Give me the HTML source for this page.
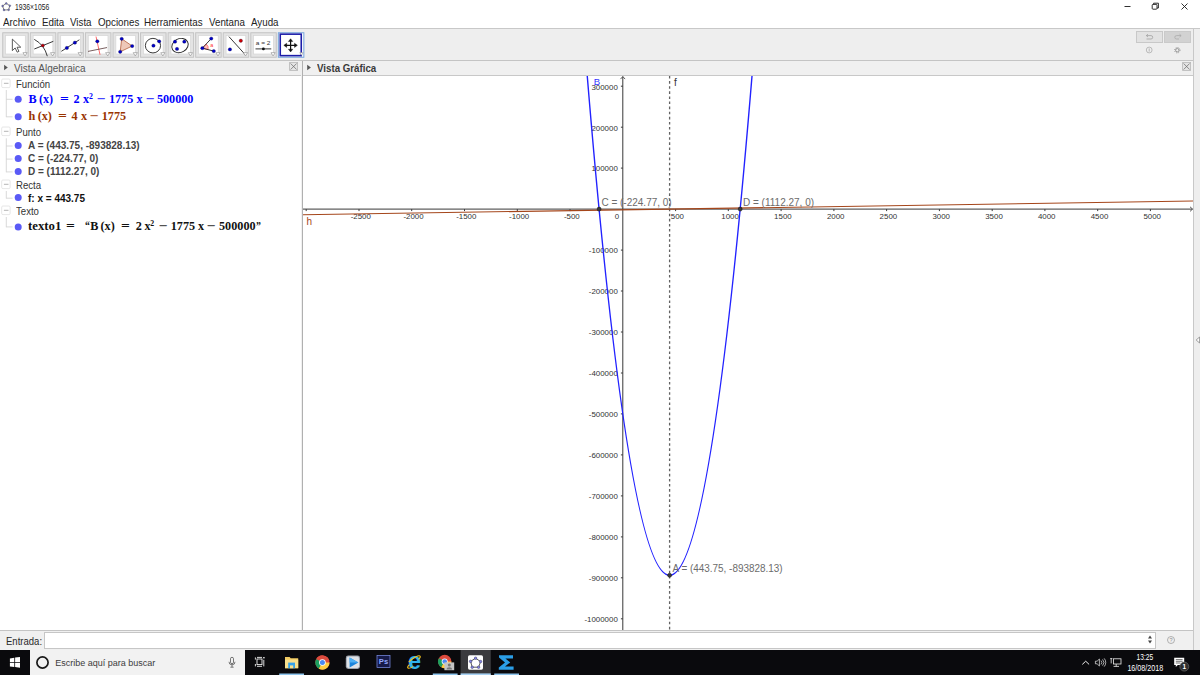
<!DOCTYPE html>
<html lang="es"><head><meta charset="utf-8"><title>1936×1056</title>
<style>
html,body{margin:0;padding:0}
body{width:1200px;height:675px;overflow:hidden;background:#fff;position:relative;font-family:"Liberation Sans",sans-serif;color:#222}
.abs{position:absolute}
.title{left:15px;top:1.5px;font-size:9.2px;color:#222;line-height:11px;transform:scaleX(0.74);transform-origin:0 0}
.menu{left:0;top:14px;height:15px;width:1200px;font-size:10.4px;line-height:15px;white-space:nowrap;color:#222}
.menu span{position:absolute;top:0.5px;transform:scaleX(0.94);transform-origin:0 0}
.toolbar{left:0;top:28px;width:1200px;height:33px;background:#eeeeee;border-top:1px solid #c8c8c8;border-bottom:1px solid #c4c4c4;box-sizing:border-box}
.phead{top:61px;height:14px;background:#f0f0f0;border-bottom:1px solid #c8c8c8;font-size:10px;line-height:15.2px;color:#555}
.alg{left:0;top:76px;width:300.6px;height:554px;background:#fff}
.cat{position:absolute;left:15.9px;font-size:10px;line-height:12px;color:#333;transform:scaleX(0.96);transform-origin:0 0}
.row{position:absolute;left:28px;font-size:10px;line-height:12px;font-weight:bold;color:#222;white-space:nowrap}
.srow{position:absolute;left:0;height:14px;width:300px;font-family:"Liberation Serif",serif;font-weight:bold;font-size:12.2px;line-height:14px;white-space:nowrap}
.srow span{position:absolute;top:0}
.srow sup{font-size:7.8px;line-height:0;position:relative;top:1.2px;vertical-align:super}
.srow .op{transform:scaleX(1.28);transform-origin:0 50%}
.srow .q{transform:scaleX(0.8);transform-origin:0 50%}
.split{left:300.6px;top:61px;width:2.5px;height:569px;background:#f0f0f0;border-right:1px solid #b0b0b0;box-sizing:border-box}
.rstrip{z-index:2;left:1193px;top:29px;width:7px;height:621px;background:#eeeeee;border-left:1px solid #c8c8c8;box-sizing:border-box}
.inbar{left:0;top:630px;width:1200px;height:20px;background:#f0f0f0;border-top:1px solid #c4c4c4;box-sizing:border-box}
.infield{left:44px;top:632px;width:1112px;height:17px;background:#fff;border:0.8px solid #c6c6c6;box-sizing:border-box}
.task{left:0;top:650px;width:1200px;height:25px;background:#0a0a0d}
.search{left:30px;top:650px;width:215px;height:25px;background:#f2f2f2}
</style></head><body>
<!-- title bar -->
<svg class="abs" style="left:1.3px;top:2.2px" width="10.8" height="10" viewBox="0 0 13 12"><path d="M6.3 1.6 L10.6 4.4 L9.2 9.4 L3.6 9.6 L1.9 4.8 Z" fill="none" stroke="#444" stroke-width="0.8"/><g fill="#7a7ad8" stroke="#333" stroke-width="0.4"><circle cx="6.3" cy="1.7" r="1.1"/><circle cx="10.6" cy="4.4" r="1.1"/><circle cx="9.2" cy="9.4" r="1.1"/><circle cx="3.6" cy="9.6" r="1.1"/><circle cx="1.9" cy="4.8" r="1.1"/></g></svg>
<div class="abs title">1936×1056</div>
<svg class="abs" style="left:1115px;top:0" width="85" height="14" viewBox="0 0 85 14" fill="none" stroke="#1a1a1a" stroke-width="0.9"><path d="M9.5 6.5 H15.5"/><rect x="37.2" y="4.4" width="4.8" height="4.8" rx="0.8"/><path d="M38.6 4.4 V3.2 H43.4 V8 H42"/><path d="M66.5 3.5 L72.5 9.5 M72.5 3.5 L66.5 9.5"/></svg>
<!-- menu -->
<div class="abs menu"><span style="left:3px">Archivo</span><span style="left:41.6px">Edita</span><span style="left:69.6px">Vista</span><span style="left:97.5px">Opciones</span><span style="left:144.1px">Herramientas</span><span style="left:208.5px">Ventana</span><span style="left:250.5px">Ayuda</span></div>
<!-- toolbar -->
<div class="abs toolbar"><svg class="abs" style="left:0;top:-1px" width="310" height="33" viewBox="0 28 310 33"><rect x="2.75" y="32.75" width="25.5" height="24.5" fill="#e4e4e4" stroke="#c4c4c4" stroke-width="1"/><rect x="5.60" y="35.60" width="19.7" height="18.4" fill="#fff" stroke="#d6d6d6" stroke-width="0.7"/><g transform="translate(4.85 37.00) scale(1 0.96)"><path transform="translate(1.5 -0.8)" d="M6 3 V15 L8.8 12.2 L10.8 16.6 L12.6 15.8 L10.7 11.5 L14.4 11.4 Z" fill="#fff" stroke="#444" stroke-width="0.9" stroke-linejoin="round"/></g><path d="M22.95 52.65 h4.2 l-2.1 3.3 z" fill="#fff" stroke="#8a8a8a" stroke-width="0.6"/><rect x="30.31" y="32.75" width="25.5" height="24.5" fill="#e4e4e4" stroke="#c4c4c4" stroke-width="1"/><rect x="33.16" y="35.60" width="19.7" height="18.4" fill="#fff" stroke="#d6d6d6" stroke-width="0.7"/><g transform="translate(32.41 37.00) scale(1 0.96)"><g transform="translate(0.9 1)"><g stroke="#2a2a2a" stroke-width="0.95" fill="none"><path d="M1 11.5 L20 3.5"/><path d="M1 1.5 Q11 7 14 19"/></g><circle cx="9.5" cy="7.8" r="1.6" fill="#c00000" stroke="#000033" stroke-width="0.3"/></g></g><path d="M50.51 52.65 h4.2 l-2.1 3.3 z" fill="#fff" stroke="#8a8a8a" stroke-width="0.6"/><rect x="57.87" y="32.75" width="25.5" height="24.5" fill="#e4e4e4" stroke="#c4c4c4" stroke-width="1"/><rect x="60.72" y="35.60" width="19.7" height="18.4" fill="#fff" stroke="#d6d6d6" stroke-width="0.7"/><g transform="translate(59.97 37.00) scale(1 0.96)"><g transform="translate(-0.6 0.4)"><path d="M2 14.5 L20 2.5" stroke="#2a2a2a" stroke-width="0.95"/><circle cx="7.5" cy="11" r="1.7" fill="#0000c8" stroke="#000033" stroke-width="0.3"/><circle cx="15.5" cy="5.5" r="1.7" fill="#0000c8" stroke="#000033" stroke-width="0.3"/></g></g><path d="M78.07 52.65 h4.2 l-2.1 3.3 z" fill="#fff" stroke="#8a8a8a" stroke-width="0.6"/><rect x="85.43" y="32.75" width="25.5" height="24.5" fill="#e4e4e4" stroke="#c4c4c4" stroke-width="1"/><rect x="88.28" y="35.60" width="19.7" height="18.4" fill="#fff" stroke="#d6d6d6" stroke-width="0.7"/><g transform="translate(87.53 37.00) scale(1 0.96)"><g transform="translate(-0.5 -0.5)"><path d="M9 0 L13 19" stroke="#ff4040" stroke-width="0.8"/><path d="M1 15.5 L20 11.5" stroke="#553333" stroke-width="0.8"/><circle cx="10.3" cy="5" r="1.7" fill="#0000c8" stroke="#000033" stroke-width="0.3"/></g></g><path d="M105.63 52.65 h4.2 l-2.1 3.3 z" fill="#fff" stroke="#8a8a8a" stroke-width="0.6"/><rect x="112.99" y="32.75" width="25.5" height="24.5" fill="#e4e4e4" stroke="#c4c4c4" stroke-width="1"/><rect x="115.84" y="35.60" width="19.7" height="18.4" fill="#fff" stroke="#d6d6d6" stroke-width="0.7"/><g transform="translate(115.09 37.00) scale(1 0.96)"><g transform="translate(-0.4 -0.6)"><path d="M7 2.5 L17.5 10 L5.5 16 Z" fill="#eec8b8" stroke="#b86a4a" stroke-width="0.9"/><circle cx="7" cy="2.5" r="1.7" fill="#0000c8" stroke="#000033" stroke-width="0.3"/><circle cx="17.5" cy="10" r="1.7" fill="#0000c8" stroke="#000033" stroke-width="0.3"/><circle cx="5.5" cy="16" r="1.7" fill="#0000c8" stroke="#000033" stroke-width="0.3"/></g></g><path d="M133.19 52.65 h4.2 l-2.1 3.3 z" fill="#fff" stroke="#8a8a8a" stroke-width="0.6"/><rect x="140.55" y="32.75" width="25.5" height="24.5" fill="#e4e4e4" stroke="#c4c4c4" stroke-width="1"/><rect x="143.40" y="35.60" width="19.7" height="18.4" fill="#fff" stroke="#d6d6d6" stroke-width="0.7"/><g transform="translate(142.65 37.00) scale(1 0.96)"><g transform="translate(1 -1)"><circle cx="9.3" cy="10" r="7.6" fill="none" stroke="#2a2a2a" stroke-width="0.95"/><circle cx="9.8" cy="10" r="1.7" fill="#0000c8" stroke="#000033" stroke-width="0.3"/><circle cx="15.5" cy="5.5" r="1.7" fill="#0000c8" stroke="#000033" stroke-width="0.3"/></g></g><path d="M160.75 52.65 h4.2 l-2.1 3.3 z" fill="#fff" stroke="#8a8a8a" stroke-width="0.6"/><rect x="168.11" y="32.75" width="25.5" height="24.5" fill="#e4e4e4" stroke="#c4c4c4" stroke-width="1"/><rect x="170.96" y="35.60" width="19.7" height="18.4" fill="#fff" stroke="#d6d6d6" stroke-width="0.7"/><g transform="translate(170.21 37.00) scale(1 0.96)"><g transform="translate(-0.7 -1.1)"><ellipse cx="10.5" cy="10" rx="8.6" ry="7" transform="rotate(-30 10.5 10)" fill="none" stroke="#2a2a2a" stroke-width="0.95"/><circle cx="5.5" cy="6" r="1.7" fill="#0000c8" stroke="#000033" stroke-width="0.3"/><circle cx="14.8" cy="6" r="1.7" fill="#0000c8" stroke="#000033" stroke-width="0.3"/><circle cx="7.5" cy="13.5" r="1.7" fill="#0000c8" stroke="#000033" stroke-width="0.3"/></g></g><path d="M188.31 52.65 h4.2 l-2.1 3.3 z" fill="#fff" stroke="#8a8a8a" stroke-width="0.6"/><rect x="195.67" y="32.75" width="25.5" height="24.5" fill="#e4e4e4" stroke="#c4c4c4" stroke-width="1"/><rect x="198.52" y="35.60" width="19.7" height="18.4" fill="#fff" stroke="#d6d6d6" stroke-width="0.7"/><g transform="translate(197.77 37.00) scale(1 0.96)"><path d="M4.6 11.6 L8.4 7.3 A5.5 5.5 0 0 1 10.2 13.2 Z" fill="#ffc0c0" stroke="#ff3030" stroke-width="0.6"/><path d="M13.5 1.6 L4.6 11.6 L16 14.7" fill="none" stroke="#2a2a2a" stroke-width="0.95"/><circle cx="13.5" cy="1.6" r="1.7" fill="#0000c8" stroke="#000033" stroke-width="0.3"/><circle cx="4.6" cy="11.6" r="1.7" fill="#0000c8" stroke="#000033" stroke-width="0.3"/><circle cx="16" cy="14.7" r="1.7" fill="#0000c8" stroke="#000033" stroke-width="0.3"/><text x="12.4" y="10.6" font-size="5.5" fill="#ff3030" font-family="Liberation Sans, sans-serif">a</text></g><path d="M215.87 52.65 h4.2 l-2.1 3.3 z" fill="#fff" stroke="#8a8a8a" stroke-width="0.6"/><rect x="223.23" y="32.75" width="25.5" height="24.5" fill="#e4e4e4" stroke="#c4c4c4" stroke-width="1"/><rect x="226.08" y="35.60" width="19.7" height="18.4" fill="#fff" stroke="#d6d6d6" stroke-width="0.7"/><g transform="translate(225.33 37.00) scale(1 0.96)"><path d="M3.6 -0.4 L20.2 18.7" stroke="#2a2a2a" stroke-width="0.95"/><circle cx="4.6" cy="12.9" r="1.7" fill="#0000c8" stroke="#000033" stroke-width="0.3"/><circle cx="15.5" cy="3.9" r="1.7" fill="#d00000" stroke="#000033" stroke-width="0.3"/></g><path d="M243.43 52.65 h4.2 l-2.1 3.3 z" fill="#fff" stroke="#8a8a8a" stroke-width="0.6"/><rect x="250.79" y="32.75" width="25.5" height="24.5" fill="#e4e4e4" stroke="#c4c4c4" stroke-width="1"/><rect x="253.64" y="35.60" width="19.7" height="18.4" fill="#fff" stroke="#d6d6d6" stroke-width="0.7"/><g transform="translate(252.89 37.00) scale(1 0.96)"><text x="10.3" y="8.2" font-size="6.5" text-anchor="middle" fill="#333" font-family="Liberation Sans, sans-serif">a = 2</text><path d="M2.6 12.4 H18.4" stroke="#2a2a2a" stroke-width="0.95"/><circle cx="10.5" cy="12.4" r="1.4" fill="#111"/></g><path d="M270.99 52.65 h4.2 l-2.1 3.3 z" fill="#fff" stroke="#8a8a8a" stroke-width="0.6"/><rect x="278.35" y="32.75" width="25.5" height="24.5" fill="#fff" stroke="#74a4dc" stroke-width="1"/><rect x="280.25" y="34.15" width="21" height="21.5" fill="#fff" stroke="#1c1ca8" stroke-width="1.6"/><g transform="translate(280.45 37.00) scale(1 0.96)"><g transform="translate(10.15 8.7)" fill="#111" stroke="#111" stroke-width="0.4"><path d="M0 -5 V5 M-5 0 H5" stroke-width="1.2"/><path d="M0 -6.9 l-2.2 2.9 h4.4z M0 6.9 l-2.2 -2.9 h4.4z M-6.8 0 l2.9 -2.2 v4.4z M6.8 0 l-2.9 -2.2 v4.4z"/></g></g><path d="M299.75 52.65 h3.4 l-1.7 2.6 z" fill="#fff" stroke="#999" stroke-width="0.6"/></svg>
<div class="abs" style="left:1136.3px;top:2.3px;width:26.4px;height:11.5px;background:#e2e2e2;border:0.7px solid #c8c8c8;box-sizing:border-box"></div>
<div class="abs" style="left:1164.2px;top:2.3px;width:26.8px;height:11.5px;background:#d2d2d2;border:0.7px solid #cacaca;box-sizing:border-box"></div>
<svg class="abs" style="left:1136px;top:2.6px" width="56" height="24" viewBox="0 0 56 24" fill="none" stroke="#999" stroke-width="0.7"><path d="M10.5 3.6 H15 a1.6 1.6 0 0 1 0 3.4 H10.5 M12 2.2 L10.3 3.6 L12 5"/><path d="M45 3.6 H40.5 a1.6 1.6 0 0 0 0 3.4 H43 M43.5 2.2 L45.2 3.6 L43.5 5" stroke="#aaa" stroke-width="0.8"/><circle cx="13.2" cy="18" r="2.9" stroke="#a4a4a4"/><path d="M13.2 16.4 V19.6" stroke="#a0a0a0"/><circle cx="41.3" cy="18.2" r="1.7" stroke="#8c8c8c" stroke-width="0.9"/><circle cx="41.3" cy="18.2" r="2.7" stroke="#8c8c8c" stroke-width="1" stroke-dasharray="0.9 1.22"/></svg>
</div>
<!-- panel headers -->
<div class="abs phead" style="left:0;width:300.6px"><svg class="abs" style="left:0;top:0" width="12" height="14" viewBox="0 0 12 14"><path d="M4.1 3.7 L7.8 6.5 L4.1 9.3 Z" fill="#555"/></svg><span class="abs" style="left:14px;top:0">Vista Algebraica</span><svg class="abs" style="left:288.8px;top:0" width="11" height="12" viewBox="0 0 11 12"><rect x="0.6" y="1.5" width="8" height="8" fill="#e4e4e4" stroke="#b8b8b8" stroke-width="0.8"/><path d="M1.6 2.5 L7.6 8.5 M7.6 2.5 L1.6 8.5" stroke="#666" stroke-width="0.7"/></svg></div>
<div class="abs phead" style="left:303.1px;width:889.9px"><svg class="abs" style="left:0;top:0" width="12" height="14" viewBox="0 0 12 14"><path d="M4.2 3.7 L7.9 6.5 L4.2 9.3 Z" fill="#555"/></svg><span class="abs" style="left:14.1px;top:0;font-weight:bold;color:#3a3a3a;transform:scaleX(0.972);transform-origin:0 0">Vista Gráfica</span><svg class="abs" style="left:878.9px;top:0" width="11" height="12" viewBox="0 0 11 12"><rect x="0.6" y="1.5" width="8" height="8" fill="#e4e4e4" stroke="#b8b8b8" stroke-width="0.8"/><path d="M1.6 2.5 L7.6 8.5 M7.6 2.5 L1.6 8.5" stroke="#666" stroke-width="0.7"/></svg></div>
<div class="abs split"></div>
<div class="abs rstrip"><svg class="abs" style="left:0.5px;top:307px" width="6" height="8" viewBox="0 0 6 8"><path d="M4.6 1 L1.2 4 L4.6 7 Z" fill="#fff" stroke="#777" stroke-width="0.7"/></svg></div>
<!-- algebra view -->
<div class="abs alg">
<svg class="abs" style="left:0;top:2.0px" width="12" height="11" viewBox="0 0 12 11"><rect x="1.7" y="1" width="8.4" height="8.6" rx="1.2" fill="#fff" stroke="#e0e0e0" stroke-width="0.8"/><path d="M3.9 5.3 H8.5" stroke="#b4b4b4" stroke-width="1"/></svg><div class="cat" style="top:2.8px">Función</div>
<div class="srow" style="top:15.6px;color:#0000ff"><span style="left:28.4px">B</span><span style="left:38.9px">(x)</span><span class="op" style="left:60.0px">=</span><span style="left:73.5px">2</span><span style="left:83.0px">x</span><span style="left:88.9px"><sup>2</sup></span><span class="op" style="left:96.9px">−</span><span style="left:108.9px">1775</span><span style="left:136.4px">x</span><span class="op" style="left:145.5px">−</span><span style="left:156.9px">500000</span></div>
<div class="srow" style="top:32.6px;color:#993300"><span style="left:28.4px">h</span><span style="left:37.7px">(x)</span><span class="op" style="left:57.7px">=</span><span style="left:71.4px">4</span><span style="left:80.9px">x</span><span class="op" style="left:89.7px">−</span><span style="left:101.7px">1775</span></div>
<svg class="abs" style="left:0;top:50.3px" width="12" height="11" viewBox="0 0 12 11"><rect x="1.7" y="1" width="8.4" height="8.6" rx="1.2" fill="#fff" stroke="#e0e0e0" stroke-width="0.8"/><path d="M3.9 5.3 H8.5" stroke="#b4b4b4" stroke-width="1"/></svg><div class="cat" style="top:51.1px">Punto</div>
<div class="row" style="top:64.3px;color:#444">A = (443.75, -893828.13)</div>
<div class="row" style="top:77.3px;color:#444">C = (-224.77, 0)</div>
<div class="row" style="top:90.1px;color:#444">D = (1112.27, 0)</div>
<svg class="abs" style="left:0;top:102.9px" width="12" height="11" viewBox="0 0 12 11"><rect x="1.7" y="1" width="8.4" height="8.6" rx="1.2" fill="#fff" stroke="#e0e0e0" stroke-width="0.8"/><path d="M3.9 5.3 H8.5" stroke="#b4b4b4" stroke-width="1"/></svg><div class="cat" style="top:103.7px">Recta</div>
<div class="row" style="top:116.5px;color:#111">f: x = 443.75</div>
<svg class="abs" style="left:0;top:129.0px" width="12" height="11" viewBox="0 0 12 11"><rect x="1.7" y="1" width="8.4" height="8.6" rx="1.2" fill="#fff" stroke="#e0e0e0" stroke-width="0.8"/><path d="M3.9 5.3 H8.5" stroke="#b4b4b4" stroke-width="1"/></svg><div class="cat" style="top:129.8px">Texto</div>
<div class="srow" style="top:142.6px;color:#111"><span style="left:28.4px"><span style="position:static;display:inline-block;transform:scaleX(1.05);transform-origin:0 50%">texto1</span></span><span class="op" style="left:66.2px">=</span><span class="q" style="left:85.1px">“</span><span style="left:90.2px">B</span><span style="left:100.5px">(x)</span><span class="op" style="left:121.0px">=</span><span style="left:135.7px">2</span><span style="left:144.4px">x</span><span style="left:150.2px"><sup>2</sup></span><span class="op" style="left:159.1px">−</span><span style="left:170.7px">1775</span><span style="left:198.0px">x</span><span class="op" style="left:207.4px">−</span><span style="left:219.0px">500000</span><span class="q" style="left:256.4px">”</span></div>
<svg class="abs" style="left:0;top:0" width="30" height="160" viewBox="0 0 30 160"><path d="M6.3 14.0 V41.2" stroke="#d0d0d0" stroke-width="0.8"/><path d="M6.3 23.3 H12.6" stroke="#d0d0d0" stroke-width="0.8"/><path d="M6.3 40.8 H12.6" stroke="#d0d0d0" stroke-width="0.8"/><circle cx="18.2" cy="23.3" r="3.5" fill="#5a5af6"/><circle cx="18.2" cy="40.8" r="3.5" fill="#5a5af6"/><path d="M6.3 62.3 V96.3" stroke="#d0d0d0" stroke-width="0.8"/><path d="M6.3 70.0 H12.6" stroke="#d0d0d0" stroke-width="0.8"/><path d="M6.3 83.1 H12.6" stroke="#d0d0d0" stroke-width="0.8"/><path d="M6.3 95.9 H12.6" stroke="#d0d0d0" stroke-width="0.8"/><circle cx="18.2" cy="69.4" r="3.5" fill="#5a5af6"/><circle cx="18.2" cy="82.4" r="3.5" fill="#5a5af6"/><circle cx="18.2" cy="95.4" r="3.5" fill="#5a5af6"/><path d="M6.3 115.0 V122.6" stroke="#d0d0d0" stroke-width="0.8"/><path d="M6.3 122.2 H12.6" stroke="#d0d0d0" stroke-width="0.8"/><circle cx="18.2" cy="121.4" r="3.5" fill="#5a5af6"/><path d="M6.3 141.0 V151.3" stroke="#d0d0d0" stroke-width="0.8"/><path d="M6.3 150.9 H12.6" stroke="#d0d0d0" stroke-width="0.8"/><circle cx="18.2" cy="150.9" r="3.5" fill="#5a5af6"/></svg>
</div>
<!-- graphics view -->
<svg class="gv" style="position:absolute;left:303px;top:76px" width="890" height="554" viewBox="303 76 890 554">
<g stroke="#383838" stroke-width="1" fill="none">
<path d="M303 209.1 H1192.5"/>
<path d="M622.8 630 V76.6"/>
<path stroke-width="0.8" d="M1192.6 209.1 l-2.6 -2.3 M1192.6 209.1 l-2.6 2.3"/>
<path stroke-width="0.8" d="M622.8 76.5 l-2.3 2.6 M622.8 76.5 l2.3 2.6"/>
<path d="M306.2 209.1 v2.0 M359.0 209.1 v2.0 M411.7 209.1 v2.0 M464.5 209.1 v2.0 M517.3 209.1 v2.0 M570.0 209.1 v2.0 M675.6 209.1 v2.0 M728.3 209.1 v2.0 M781.1 209.1 v2.0 M833.9 209.1 v2.0 M886.6 209.1 v2.0 M939.4 209.1 v2.0 M992.2 209.1 v2.0 M1044.9 209.1 v2.0 M1097.7 209.1 v2.0 M1150.4 209.1 v2.0 M622.8 618.8 h-1.9 M622.8 577.8 h-1.9 M622.8 536.9 h-1.9 M622.8 495.9 h-1.9 M622.8 454.9 h-1.9 M622.8 413.9 h-1.9 M622.8 373.0 h-1.9 M622.8 332.0 h-1.9 M622.8 291.0 h-1.9 M622.8 250.1 h-1.9 M622.8 168.1 h-1.9 M622.8 127.2 h-1.9 M622.8 86.2 h-1.9"/>
</g>
<g font-size="7.9" fill="#333" font-family="Liberation Sans, sans-serif">
<text x="360.8" y="219.2" text-anchor="middle">-2500</text>
<text x="413.5" y="219.2" text-anchor="middle">-2000</text>
<text x="466.3" y="219.2" text-anchor="middle">-1500</text>
<text x="519.1" y="219.2" text-anchor="middle">-1000</text>
<text x="571.8" y="219.2" text-anchor="middle">-500</text>
<text x="677.4" y="219.2" text-anchor="middle">500</text>
<text x="730.1" y="219.2" text-anchor="middle">1000</text>
<text x="782.9" y="219.2" text-anchor="middle">1500</text>
<text x="835.7" y="219.2" text-anchor="middle">2000</text>
<text x="888.4" y="219.2" text-anchor="middle">2500</text>
<text x="941.2" y="219.2" text-anchor="middle">3000</text>
<text x="994.0" y="219.2" text-anchor="middle">3500</text>
<text x="1046.7" y="219.2" text-anchor="middle">4000</text>
<text x="1099.5" y="219.2" text-anchor="middle">4500</text>
<text x="1152.2" y="219.2" text-anchor="middle">5000</text>
<text x="619.2" y="219.2" text-anchor="end">0</text>
<text x="617.8" y="622.1" text-anchor="end">-1000000</text>
<text x="617.8" y="581.1" text-anchor="end">-900000</text>
<text x="617.8" y="540.2" text-anchor="end">-800000</text>
<text x="617.8" y="499.2" text-anchor="end">-700000</text>
<text x="617.8" y="458.2" text-anchor="end">-600000</text>
<text x="617.8" y="417.2" text-anchor="end">-500000</text>
<text x="617.8" y="376.3" text-anchor="end">-400000</text>
<text x="617.8" y="335.3" text-anchor="end">-300000</text>
<text x="617.8" y="294.3" text-anchor="end">-200000</text>
<text x="617.8" y="253.4" text-anchor="end">-100000</text>
<text x="617.8" y="171.4" text-anchor="end">100000</text>
<text x="617.8" y="130.5" text-anchor="end">200000</text>
<text x="617.8" y="89.5" text-anchor="end">300000</text>
</g>
<path d="M669.6 76 V630" stroke="#626262" stroke-width="1.3" stroke-dasharray="2.6 2.5" fill="none"/>
<path d="M303.00 214.79 L1193.00 200.97" stroke="#a5461b" stroke-width="1.05" fill="none"/>
<path d="M585.00 48.34 Q670.00 1106.89 755.00 39.05" stroke="#2222ff" stroke-width="1.4" fill="none"/>
<circle cx="599.1" cy="209.1" r="2.0" fill="#3a3a3a" stroke="#111" stroke-width="0.5"/>
<circle cx="740.2" cy="209.1" r="2.0" fill="#3a3a3a" stroke="#111" stroke-width="0.5"/>
<circle cx="669.6" cy="575.3" r="2.0" fill="#3a3a3a" stroke="#111" stroke-width="0.5"/>
<g font-size="10" fill="#6c6c6c" font-family="Liberation Sans, sans-serif">
<text x="601.4" y="205.8">C = (-224.77, 0)</text>
<text x="743" y="205.8">D = (1112.27, 0)</text>
<text x="672.6" y="572.1" textLength="110" lengthAdjust="spacingAndGlyphs">A = (443.75, -893828.13)</text>
<text x="674" y="85.9" fill="#333">f</text>
<text x="593.8" y="85.4" fill="#3333ff" font-size="9.6">B</text>
<text x="306.4" y="225" fill="#a5461b">h</text>
</g>
</svg>
<!-- input bar -->
<div class="abs inbar"></div><div class="abs" style="left:6.3px;top:634.6px;font-size:10.6px;line-height:12px;color:#2a2a2a;transform:scaleX(0.9);transform-origin:0 0">Entrada:</div>
<div class="abs infield"></div>
<svg class="abs" style="left:1146.4px;top:634.4px" width="8" height="11" viewBox="0 0 8 11"><path d="M4 1.6 L6 4.6 H2 Z M4 9.4 L6 6.4 H2 Z" fill="#444"/></svg>
<svg class="abs" style="left:1164.8px;top:634px" width="12" height="12" viewBox="0 0 12 12"><circle cx="6" cy="6" r="3.5" fill="none" stroke="#a0a0a0" stroke-width="0.8"/><text x="6" y="8" font-size="5.6" text-anchor="middle" fill="#909090" font-family="Liberation Sans, sans-serif">?</text></svg>
<!-- taskbar -->
<div class="abs task"></div><div class="abs search"></div>
<svg class="abs" style="left:0;top:650px" width="1200" height="25" viewBox="0 650 1200 25" font-family="Liberation Sans, sans-serif">
<!-- start -->
<path d="M9.9 658.4 L14.3 657.7 V662 H9.9Z M15.1 657.6 L20 656.9 V662 H15.1Z M9.9 662.8 H14.3 V667 L9.9 666.4Z M15.1 662.8 H20 V667.8 L15.1 667.1Z" fill="#fff"/>
<circle cx="42.5" cy="662.5" r="5.6" fill="none" stroke="#1a1a1a" stroke-width="1.7"/>
<text x="55.3" y="666.1" font-size="9.6" fill="#3c3c3c" textLength="100" lengthAdjust="spacingAndGlyphs">Escribe aquí para buscar</text>
<g fill="none" stroke="#555" stroke-width="0.8"><rect x="230.5" y="657.3" width="3" height="6.4" rx="1.5"/><path d="M229 661.8 a3 3 0 0 0 6 0 M232 664.9 V667 M230.4 667.2 H233.6"/></g>
<!-- task view -->
<g fill="none" stroke="#f0f0f0" stroke-width="0.9"><rect x="257" y="659" width="5" height="5.6"/><path d="M255.4 657.4 V659.6 M255.4 664 V666.4 M263.8 659.8 V666.4 M257 657.4 H262 M257 666.3 H262"/></g><rect x="263.2" y="657" width="1.4" height="1.4" fill="#f0f0f0"/>
<!-- explorer -->
<g><path d="M285 657 h4.6 l1.1 1.3 h7.5 v9.9 h-13.2z" fill="#f2cb62"/><rect x="285" y="659.6" width="13.2" height="8.6" fill="#f8df8c"/><rect x="288.2" y="662.6" width="6.8" height="5.6" fill="#35a2ea"/><rect x="290" y="665.4" width="3.2" height="2.8" fill="#f8df8c"/></g>
<rect x="279.2" y="673.5" width="24.8" height="1.5" fill="#8fc6ee"/>
<!-- chrome -->
<g><circle cx="322.4" cy="662.5" r="7.1" fill="#dc4a3d"/><path d="M322.4 662.5 L316.25 658.95 A7.1 7.1 0 0 0 318.85 668.65 Z" fill="#1ba05f"/><path d="M322.4 662.5 L318.85 668.65 A7.1 7.1 0 0 0 329.5 662.5 Z" fill="#ffcd42"/><path d="M316.25 658.95 A7.1 7.1 0 0 1 329.4 661 L322.4 661 Z" fill="#dc4a3d"/><circle cx="322.4" cy="662.5" r="3.3" fill="#fff"/><circle cx="322.4" cy="662.5" r="2.5" fill="#4a8af4"/></g>
<!-- media -->
<g><rect x="345.8" y="655.6" width="14.2" height="13.4" rx="2.4" fill="#9da2ab"/><rect x="346.8" y="656.6" width="12.2" height="11.4" rx="1.8" fill="#dfe2e6"/><path d="M349.6 657.4 L358.4 662.4 L349.6 667.4 Z" fill="#1b84dc"/><path d="M349.6 657.4 L358.4 662.4 L349.6 662.4 Z" fill="#4fb0f4"/></g>
<!-- ps -->
<g><rect x="377" y="655.6" width="13" height="11.8" fill="#161a48" stroke="#7f93f0" stroke-width="0.7"/><text x="383.5" y="664.4" font-size="7.6" font-weight="bold" fill="#93a8ff" text-anchor="middle">Ps</text></g>
<!-- ie -->
<g><text x="414.6" y="668.9" font-size="23.5" font-weight="bold" fill="#2fb2ee" text-anchor="middle">e</text><path d="M409.4 664.6 C405.6 668.4 408.4 669.4 413 666.6 M418.6 659.4 C421.6 656.2 420.4 654.6 415.6 657 C413 658.3 410.6 660.2 408.8 662" fill="none" stroke="#f2c322" stroke-width="1.1"/></g>
<!-- chrome 2 -->
<g><circle cx="444.7" cy="661.5" r="6.7" fill="#dc4a3d"/><path d="M444.7 661.5 L438.9 658.15 A6.7 6.7 0 0 0 441.35 667.3 Z" fill="#1ba05f"/><path d="M444.7 661.5 L441.35 667.3 A6.7 6.7 0 0 0 451.4 661.5 Z" fill="#ffcd42"/><circle cx="444.7" cy="661.5" r="3" fill="#fff"/><circle cx="444.7" cy="661.5" r="2.3" fill="#4a8af4"/><rect x="444.4" y="662.4" width="9.8" height="7.8" fill="#c4c4c4"/><circle cx="449.3" cy="665" r="1.5" fill="#777"/><path d="M446.6 669.6 a2.7 2.4 0 0 1 5.4 0z" fill="#777"/></g>
<rect x="432.8" y="673.5" width="24.8" height="1.5" fill="#8fc6ee"/>
<!-- geogebra active -->
<rect x="460.6" y="650" width="30.2" height="25" fill="#3b3b3e"/><rect x="460.6" y="673.4" width="30.2" height="1.6" fill="#a8d2f4"/>
<g><rect x="468" y="655.3" width="15" height="14.4" rx="1.6" fill="#fff"/><path d="M475.6 658.2 L480.6 661.6 L478.6 667.2 L472.2 667.2 L470.6 661.4 Z" fill="none" stroke="#4a4a4a" stroke-width="0.9"/><g fill="#8484ec" stroke="#223" stroke-width="0.4"><circle cx="475.6" cy="658.2" r="1.3"/><circle cx="480.6" cy="661.6" r="1.3"/><circle cx="478.6" cy="667.2" r="1.3"/><circle cx="472.2" cy="667.2" r="1.3"/><circle cx="470.6" cy="661.4" r="1.3"/></g></g>
<!-- sigma -->
<path d="M499 655.3 H513 V658.4 H505.4 L510.2 662.4 L505 666.6 H513.6 V669.8 H498.8 V667.6 L505 662.5 L499 657.6 Z" fill="#2b9fe8"/>
<rect x="494.2" y="673.5" width="24.8" height="1.5" fill="#8fc6ee"/>
<!-- tray -->
<path d="M1082.3 664.4 L1085.7 661.2 L1089.1 664.4" fill="none" stroke="#f0f0f0" stroke-width="1"/>
<g fill="none" stroke="#f0f0f0" stroke-width="0.7"><path d="M1095.4 661.2 h1.7 l2.3 -2.2 v7 l-2.3 -2.2 h-1.7z"/><path d="M1101 660.6 a2.8 2.8 0 0 1 0 3.8 M1102.6 659.4 a4.6 4.6 0 0 1 0 6.2 M1104.2 658.4 a6.2 6.2 0 0 1 0 8.2"/></g>
<g fill="none" stroke="#f0f0f0" stroke-width="0.8"><rect x="1113.4" y="658.8" width="7.6" height="5.2"/><path d="M1113.6 666.4 h5.4 M1116.2 664 v2.4 M1111.2 658.4 v5 M1110.2 658.6 h2.2"/></g>
<text x="1136.6" y="659.8" font-size="8.3" fill="#fff" textLength="16.6" lengthAdjust="spacingAndGlyphs">13:25</text>
<text x="1127.4" y="670.7" font-size="8.3" fill="#fff" textLength="35.8" lengthAdjust="spacingAndGlyphs">16/08/2018</text>
<g><path d="M1174.2 657.7 h10 v7.4 h-6.4 l-2 2 v-2 h-1.6z" fill="#fff"/><path d="M1175.8 659.6 h6.8 M1175.8 661.3 h6.8 M1175.8 663 h4.6" stroke="#111" stroke-width="0.6"/><circle cx="1184.3" cy="666.6" r="4.5" fill="#2e2e2e" stroke="#6a6a6a" stroke-width="0.7"/><text x="1184.3" y="669" font-size="6.4" fill="#fff" text-anchor="middle" font-weight="bold">1</text></g>
</svg>
</body></html>
